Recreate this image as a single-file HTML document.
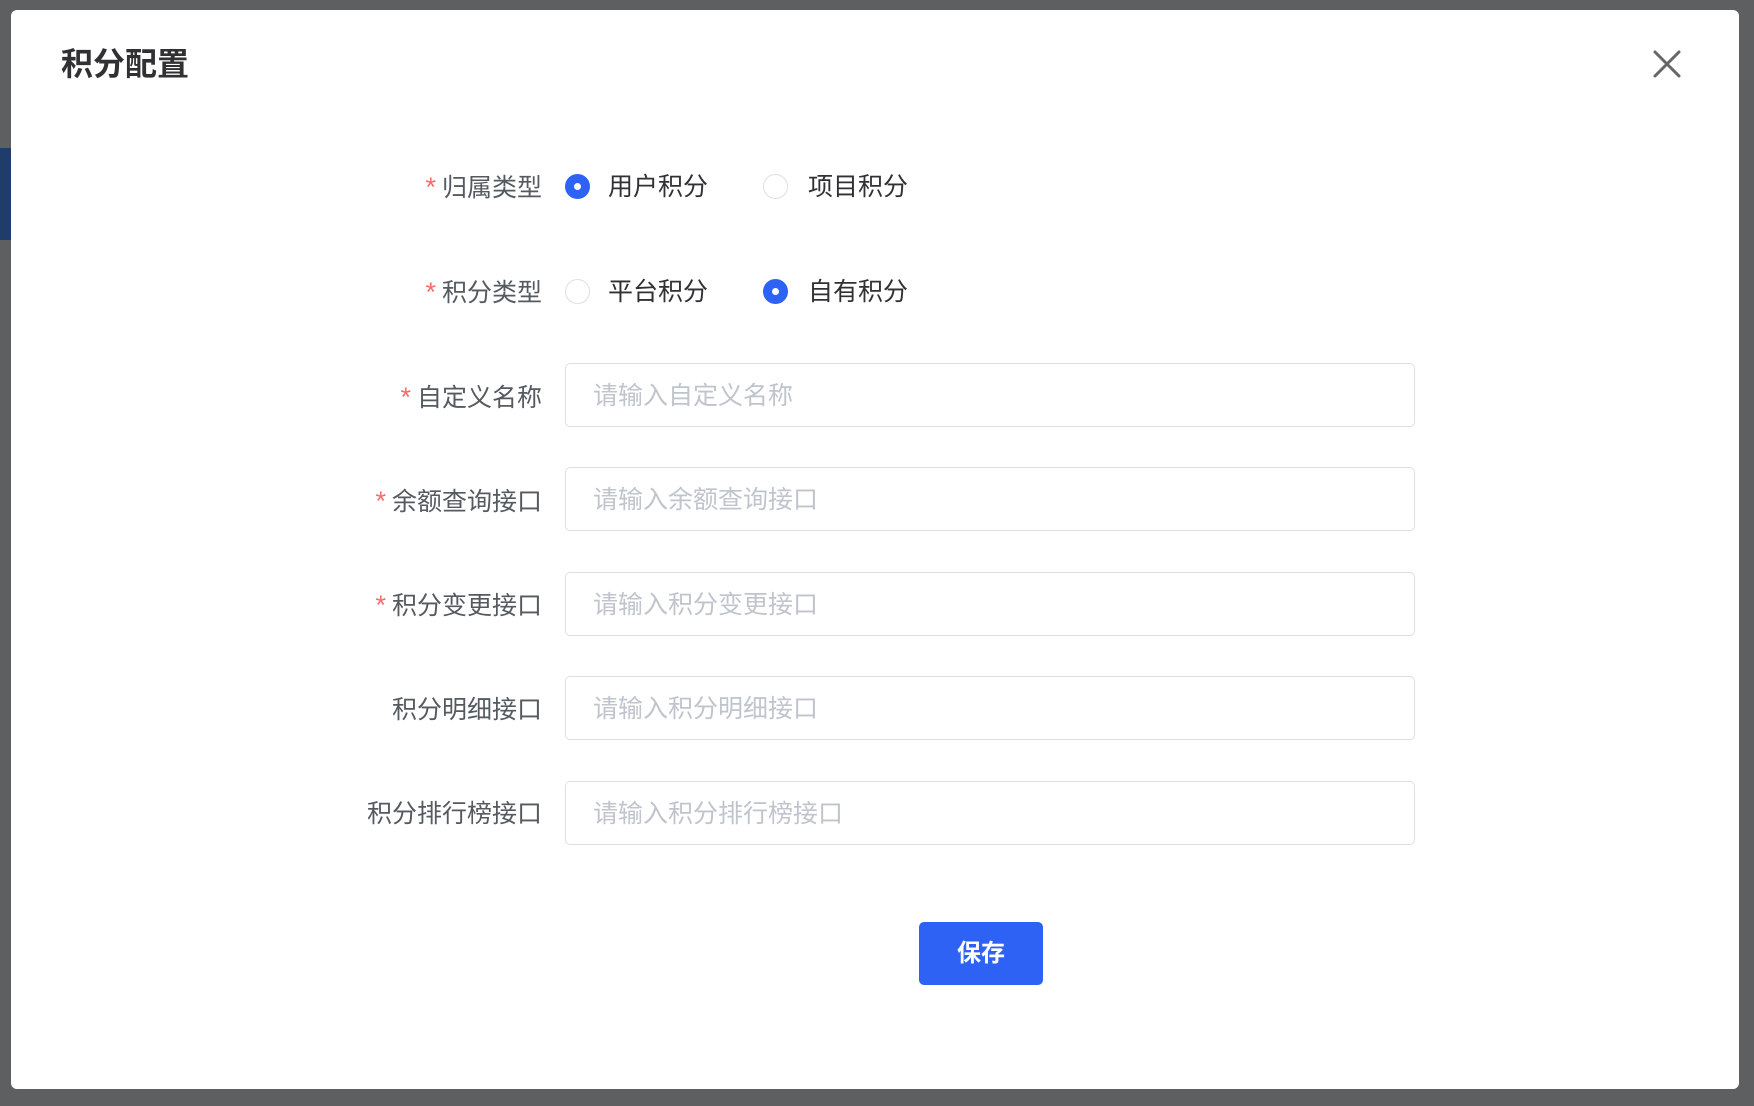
<!DOCTYPE html>
<html><head><meta charset="utf-8"><style>
*{margin:0;padding:0;box-sizing:border-box}
body{width:1754px;height:1106px;background:#5e5f61;position:relative;overflow:hidden;font-family:"Liberation Sans","Noto Sans CJK SC",sans-serif}
.blue{position:absolute;left:0;top:148px;width:11px;height:92px;background:#1f3d6b}
.dlg{position:absolute;left:11px;top:10px;width:1728px;height:1079px;background:#fff;border-radius:6px}
.title{position:absolute;left:50px;top:34px;font-size:32px;font-weight:bold;color:#303133;line-height:40px}
.close{position:absolute;left:1641px;top:39px}
.lbl{position:absolute;right:1197px;font-size:25px;color:#555a60;line-height:32px;white-space:nowrap}
.lbl b{color:#f56c6c;font-weight:normal;margin-right:6px;font-size:27px}
.inp{position:absolute;left:554px;width:850px;height:64px;border:1.5px solid #dcdfe6;border-radius:5px;font-size:25px;color:#c0c4cc;line-height:65px;padding-left:27px}
.radio{position:absolute;width:25px;height:25px;border-radius:50%;border:1.5px solid #dcdfe6}
.radio.on{background:#2e62f5;border-color:#2e62f5}
.radio.on:after{content:"";position:absolute;left:7.5px;top:7.5px;width:7px;height:7px;border-radius:50%;background:#fff}
.rt{position:absolute;font-size:25px;color:#303133;line-height:32px}
.btn{position:absolute;left:908px;top:912px;width:124px;height:63px;background:#2e62f5;border-radius:5px;color:#fff;font-size:24px;font-weight:bold;text-align:center;line-height:63px}
</style></head><body>
<div class="blue"></div>
<div class="dlg">
<div class="title">积分配置</div>
<svg class="close" width="30" height="30" viewBox="0 0 30 30"><path d="M3 3L27 27M27 3L3 27" stroke="#666" stroke-width="3" stroke-linecap="round"/></svg>

<div class="lbl" style="top:161px"><b>*</b>归属类型</div>
<div class="radio on" style="left:554px;top:164px"></div><div class="rt" style="left:597px;top:161px">用户积分</div>
<div class="radio" style="left:752px;top:164px"></div><div class="rt" style="left:797px;top:161px">项目积分</div>

<div class="lbl" style="top:266px"><b>*</b>积分类型</div>
<div class="radio" style="left:554px;top:269px"></div><div class="rt" style="left:597px;top:266px">平台积分</div>
<div class="radio on" style="left:752px;top:269px"></div><div class="rt" style="left:797px;top:266px">自有积分</div>

<div class="lbl" style="top:371px"><b>*</b>自定义名称</div>
<div class="inp" style="top:353px">请输入自定义名称</div>
<div class="lbl" style="top:475px"><b>*</b>余额查询接口</div>
<div class="inp" style="top:457px">请输入余额查询接口</div>
<div class="lbl" style="top:579px"><b>*</b>积分变更接口</div>
<div class="inp" style="top:562px">请输入积分变更接口</div>
<div class="lbl" style="top:684px">积分明细接口</div>
<div class="inp" style="top:666px">请输入积分明细接口</div>
<div class="lbl" style="top:788px">积分排行榜接口</div>
<div class="inp" style="top:771px">请输入积分排行榜接口</div>

<div class="btn">保存</div>
</div>
</body></html>
